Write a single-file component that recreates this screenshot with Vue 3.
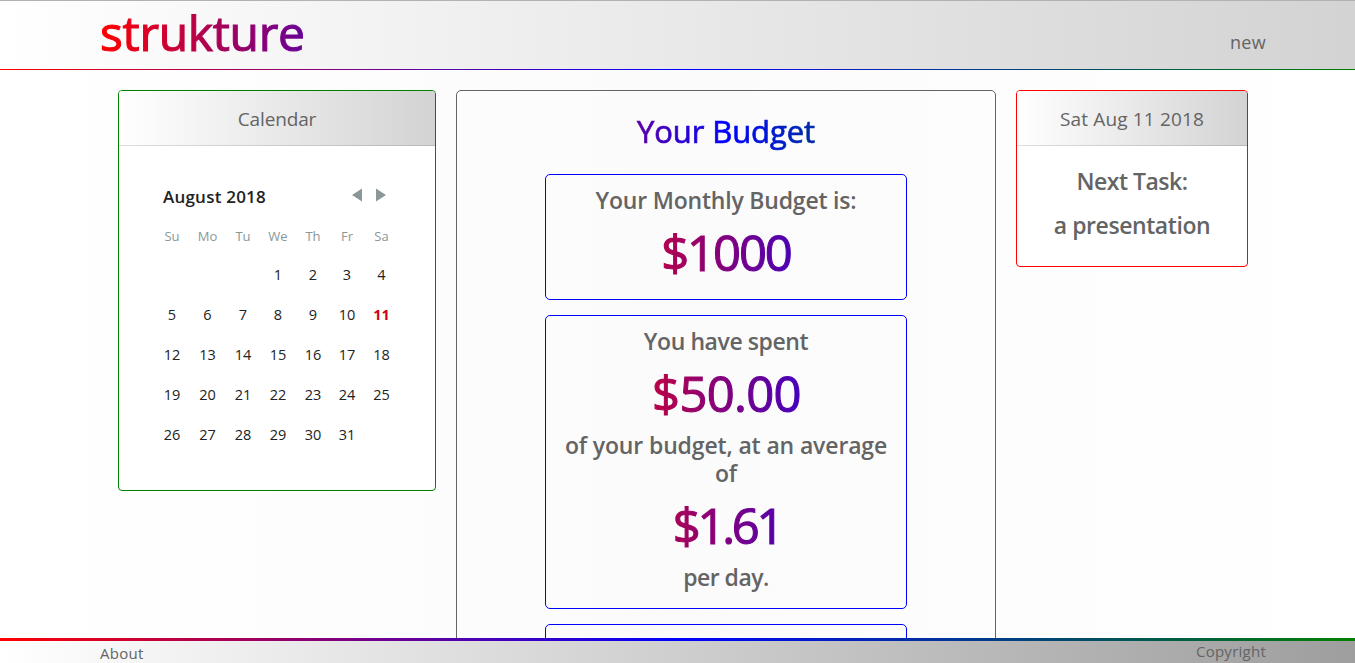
<script setup>
const days = ['Su', 'Mo', 'Tu', 'We', 'Th', 'Fr', 'Sa']
const cells = [...Array(3).fill(''), ...Array.from({ length: 31 }, (_, i) => i + 1)]
</script>

<template>
  <div class="page">
    <header class="top">
      <h1 class="logo">strukture</h1>
      <a class="new">new</a>
    </header>

    <main class="columns">
      <section class="card calendar">
        <div class="card-header"><span class="cal-title">Calendar</span></div>
        <div class="cal-body">
          <div class="cal-nav">
            <span class="month">August 2018</span>
            <svg class="arrows" width="34" height="14" viewBox="0 0 34 14">
              <path d="M10 0.5V13.5L0 7Z M24 0.5V13.5L34 7Z" fill="#899799" />
            </svg>
          </div>
          <div class="grid week">
            <span v-for="d in days" :key="d">{{ d }}</span>
          </div>
          <div class="grid dates">
            <span v-for="(c, i) in cells" :key="i" :class="{ today: c === 11 }">{{ c }}</span>
          </div>
        </div>
      </section>

      <section class="budget">
        <h2 class="title">Your Budget</h2>
        <div class="box first">
          <p class="line l1">Your Monthly Budget is:</p>
          <p class="amount a1">$1000</p>
        </div>
        <div class="box second">
          <p class="line l2">You have spent</p>
          <p class="amount a2">$50.00</p>
          <p class="line l3">of your budget, at an average<br />of</p>
          <p class="amount a3">$1.61</p>
          <p class="line l4">per day.</p>
        </div>
        <div class="box third"></div>
      </section>

      <section class="card task">
        <div class="card-header"><span class="date">Sat Aug 11 2018</span></div>
        <p class="line next">Next Task:</p>
        <p class="line name">a presentation</p>
      </section>
    </main>

    <footer class="bottom">
      <span class="about">About</span>
      <span class="copy">Copyright</span>
    </footer>
  </div>
</template>

<style>
body {
  margin: 0;
  overflow: hidden;
}
</style>

<style scoped>
* {
  box-sizing: border-box;
}
.page {
  height: 663px;
  overflow: hidden;
  display: flex;
  flex-direction: column;
  font-family: "Open Sans", "Noto Sans", sans-serif;
  color: #646464;
  background: linear-gradient(to right, #fff, #fbfbfb, #fff);
}
h1, h2, p {
  margin: 0;
}
.top {
  flex: none;
  height: 70px;
  display: flex;
  justify-content: space-between;
  padding: 0 89px 0 100px;
  border-top: 1px solid #b2b2b2;
  border-bottom: 1px solid;
  border-image: linear-gradient(to right, red, blue, green) 1;
  border-image-width: 0 0 1px 0;
  background: linear-gradient(#b2b2b2, #b2b2b2) 0 0 / 100% 1px no-repeat border-box,
    linear-gradient(to right, #fff, #d3d3d3);
}
.logo {
  width: 690px;
  font-size: 48px;
  line-height: 64px;
  font-weight: 400;
  letter-spacing: -0.3px;
  color: transparent;
  -webkit-text-stroke: 1.1px transparent;
  background: linear-gradient(to right, red, blue, green);
  -webkit-background-clip: text;
  background-clip: text;
}
.new {
  font-size: 18px;
  line-height: 24px;
  letter-spacing: 0.3px;
  margin-top: 29px;
}
.columns {
  flex: 1;
  min-height: 0;
  display: flex;
  align-items: flex-start;
  gap: 20px;
  padding: 20px 0 0 118px;
}
.card {
  border: 1px solid;
  border-radius: 4px;
  background: #fff;
  overflow: hidden;
}
.card-header {
  height: 55px;
  line-height: 56px;
  font-size: 19px;
  text-align: center;
  border-bottom: 1px solid rgba(0, 0, 0, 0.125);
  background: linear-gradient(to right, #fff, #d3d3d3);
}
.cal-title {
  letter-spacing: -0.15px;
}
.date {
  letter-spacing: 0.15px;
}
.calendar {
  width: 318px;
  height: 401px;
  border-color: green;
}
.cal-body {
  padding: 36px 36px 0 35.5px;
  color: #222;
}
.cal-nav {
  display: flex;
  justify-content: space-between;
  align-items: flex-start;
  height: 42px;
  padding: 0 13px 0 8.5px;
}
.month {
  font-size: 17px;
  line-height: 30px;
  font-weight: 600;
  letter-spacing: 0.22px;
}
.arrows {
  margin-top: 6px;
}
.grid {
  display: grid;
  grid-template-columns: 35px 36px 35px 35px 35px 33px 36px;
  text-align: center;
}
.week {
  font-size: 13px;
  line-height: 24px;
  color: #899799;
}
.dates {
  grid-auto-rows: 40px;
  line-height: 40px;
  font-size: 14.5px;
  margin-top: 7px;
}
.today {
  color: #d0021b;
  font-weight: 700;
}
.budget {
  width: 540px;
  height: 620px;
  border: 1px solid #646464;
  border-radius: 5px;
  display: flex;
  flex-direction: column;
  align-items: center;
}
.title {
  flex: none;
  width: 500px;
  height: 83px;
  font-size: 31px;
  line-height: 80px;
  font-weight: 400;
  letter-spacing: -0.1px;
  text-align: center;
  color: transparent;
  -webkit-text-stroke: 0.7px transparent;
  background: linear-gradient(to right, red, blue, green);
  -webkit-background-clip: text;
  background-clip: text;
}
.box {
  flex: none;
  width: 362px;
  margin-bottom: 15px;
  padding: 11px 0 0;
  border: 1px solid blue;
  border-radius: 5px;
  display: flex;
  flex-direction: column;
  align-items: center;
}
.first,
.third {
  height: 126px;
}
.second {
  height: 294px;
}
.line {
  font-size: 23px;
  line-height: 28px;
  font-weight: 600;
  text-align: center;
  white-space: nowrap;
}
.l1 {
  letter-spacing: -0.2px;
}
.l2 {
  letter-spacing: -0.42px;
}
.l3 {
  letter-spacing: -0.14px;
}
.l4 {
  letter-spacing: -0.5px;
}
.amount {
  width: 320px;
  height: 76px;
  line-height: 76px;
  font-size: 49px;
  font-weight: 400;
  text-align: center;
  color: transparent;
  -webkit-text-stroke: 1.1px transparent;
  background: linear-gradient(to right, red, blue);
  -webkit-background-clip: text;
  background-clip: text;
}
.a1 {
  letter-spacing: -2.1px;
}
.a2 {
  letter-spacing: -0.7px;
  padding-left: 1px;
}
.a3 {
  letter-spacing: -3.3px;
  padding-left: 2px;
}
.task {
  width: 232px;
  height: 177px;
  border-color: red;
}
.next {
  margin-top: 21px;
  letter-spacing: -0.5px;
}
.name {
  margin-top: 16px;
  letter-spacing: -0.43px;
}
.bottom {
  flex: none;
  height: 25px;
  display: flex;
  justify-content: space-between;
  padding: 0 89px 0 100px;
  font-size: 15px;
  line-height: 20px;
  letter-spacing: 0.25px;
  border-top: 3px solid;
  border-image: linear-gradient(to right, red, blue, green) 1;
  border-image-width: 3px 0 0 0;
  background: linear-gradient(to right, #fff, #9e9e9e);
}
.about {
  margin-top: 2px;
}
</style>
